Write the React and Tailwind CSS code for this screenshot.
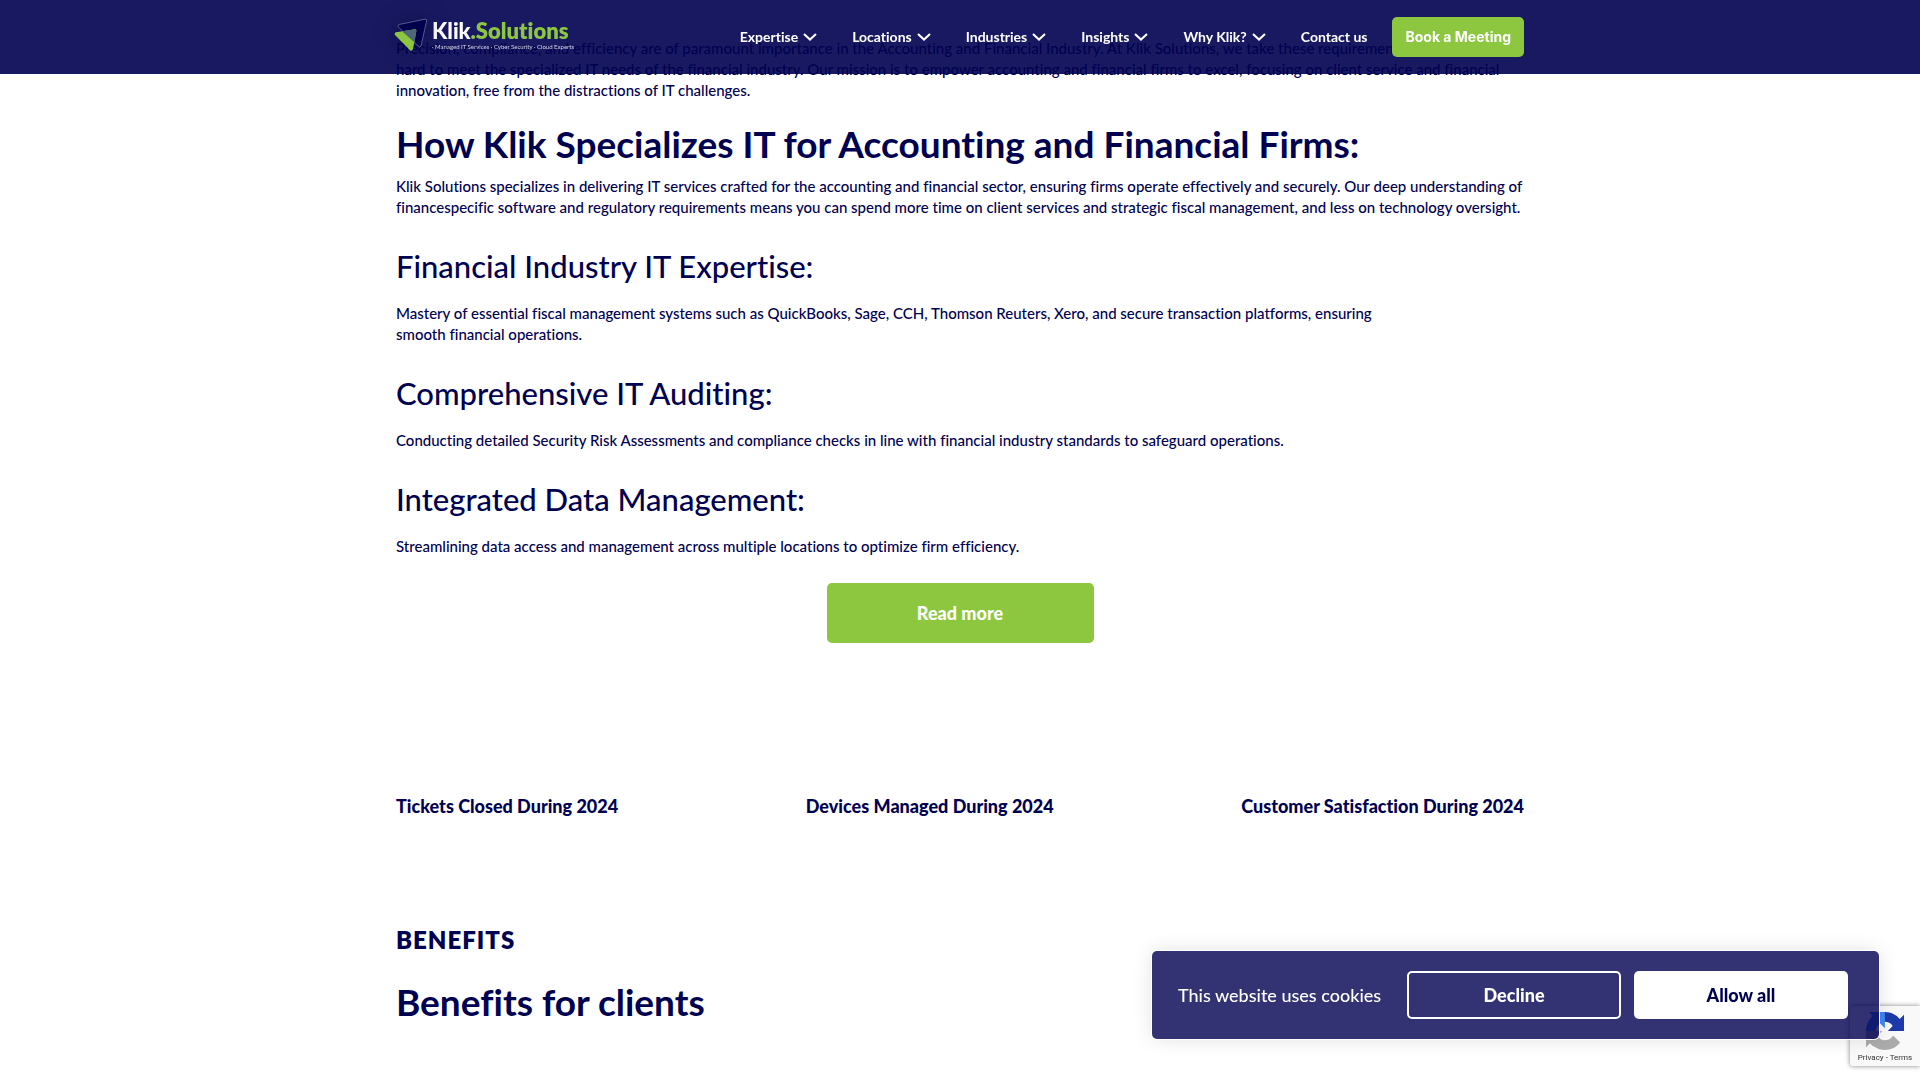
import React from "react";

const NAV = ["Expertise", "Locations", "Industries", "Insights", "Why Klik?"];

const TOPICS = [
  {
    title: "Financial Industry IT Expertise:",
    body: (
      <>
        Mastery of essential fiscal management systems such as QuickBooks, Sage, CCH, Thomson Reuters, Xero, and secure transaction platforms, ensuring
        <br />
        smooth financial operations.
      </>
    ),
  },
  {
    title: "Comprehensive IT Auditing:",
    body: "Conducting detailed Security Risk Assessments and compliance checks in line with financial industry standards to safeguard operations.",
  },
  {
    title: "Integrated Data Management:",
    body: "Streamlining data access and management across multiple locations to optimize firm efficiency.",
  },
];

const STATS = ["Tickets Closed During 2024", "Devices Managed During 2024", "Customer Satisfaction During 2024"];

function Chevron() {
  return (
    <svg className="h-2 w-[14px]" viewBox="0 0 14 8" fill="none" stroke="currentColor" strokeWidth="2" aria-hidden="true">
      <path d="M1 1l6 5.6L13 1" />
    </svg>
  );
}

function Logo() {
  return (
    <a href="#home" className="-ml-[2px] mb-1 flex items-center gap-1" aria-label="Klik Solutions">
      <svg className="h-[36px] w-[34px] drop-shadow-[0_0_10px_rgba(0,0,50,0.5)]" viewBox="0 0 34 36" aria-hidden="true">
        <path d="M5 7.5L31 2.2Q33 2 32.6 4L27 29Q26 31 24.6 29.3L4.4 10Q3.4 8 5 7.5Z" fill="#00004c" stroke="#6a6aa0" strokeWidth="0.8" />
        <path d="M2 15.3L21 12.2Q22.6 12.2 22.3 14L19 32Q18 34.8 16 33.3L1 18Q0 16 2 15.3Z" fill="#8dc73f" />
        <path d="M8 14.3L21 12.2Q22.6 12.2 22.3 14L20.5 25.5Z" fill="#4e6878" />
      </svg>
      <span className="flex flex-col">
        <span className="text-[22px] leading-6 font-black text-white">
          Klik<span className="font-extrabold text-[#8dc73f]">.Solutions</span>
        </span>
        <span className="text-[6px] leading-2 whitespace-nowrap text-white/80">· Managed IT Services · Cyber Security · Cloud Experts</span>
      </span>
    </a>
  );
}

function Header() {
  return (
    <header className="fixed inset-x-0 top-0 z-10 bg-[#000050]/90">
      <div className="mx-auto flex h-[74px] max-w-[1128px] items-center justify-between">
        <Logo />
        <nav className="flex items-center gap-[35px] text-sm font-bold text-white">
          {NAV.map((label) => (
            <button key={label} type="button" className="flex items-center gap-[5px]">
              {label}
              <Chevron />
            </button>
          ))}
          <a href="#contact">Contact us</a>
          <a href="#book" className="-ml-[10px] rounded-[5px] bg-[#8dc73f] px-[13px] py-[10px] font-['Inter',sans-serif] text-sm leading-5 font-bold">
            Book a Meeting
          </a>
        </nav>
      </div>
    </header>
  );
}

function CookieBanner() {
  return (
    <section
      aria-label="Cookie consent"
      className="fixed right-[41px] bottom-[41px] z-30 flex items-center gap-[13px] rounded-[5px] bg-[#000050]/80 py-5 pr-[31px] pl-[26px] text-lg shadow-[0_0_0_1px_#fff,0_0_20px_rgba(0,0,0,0.12)]"
    >
      <p className="mr-2 w-[208px] font-medium text-white">This website uses cookies</p>
      <button type="button" className="h-12 w-[214px] rounded-[5px] border-2 border-white font-black text-white">
        Decline
      </button>
      <button type="button" className="h-12 w-[214px] rounded-[5px] bg-white font-black text-[#000050]">
        Allow all
      </button>
    </section>
  );
}

function RecaptchaBadge() {
  return (
    <aside className="fixed right-0 bottom-[14px] z-20 flex h-[60px] w-[70px] flex-col items-center rounded-l-[3px] bg-[#f9f9f9] pt-[6px] shadow-[0_0_5px_gray]">
      <svg className="h-[38px] w-[38px]" viewBox="0 0 64 64" aria-hidden="true">
        <path d="M64 31.955l-.033-1.370V4.687l-7.160 7.160C50.948 4.674 42.033.093 32.050.093c-10.400 0-19.622 4.960-25.458 12.640l11.736 11.860a15.550 15.550 0 0 1 4.754-5.334c2.050-1.600 4.952-2.906 8.968-2.906.485 0 .86.057 1.135.163 4.976.393 9.288 3.140 11.828 7.124l-8.307 8.307L64 31.953" fill="#1c3aa9" />
        <path d="M31.862.094l-1.370.033H4.594l7.160 7.160C4.580 13.147 0 22.060 0 32.046c0 10.400 4.960 19.622 12.640 25.458L24.500 45.768a15.550 15.550 0 0 1-5.334-4.754c-1.600-2.050-2.906-4.952-2.906-8.968 0-.485.057-.86.163-1.135.393-4.976 3.140-9.288 7.124-11.828l8.307 8.307L31.860.095" fill="#4285f4" />
        <path d="M.001 32.045l.033 1.370v25.898l7.160-7.160c5.860 7.173 14.774 11.754 24.760 11.754 10.400 0 19.622-4.960 25.458-12.640l-11.736-11.860a15.550 15.550 0 0 1-4.754 5.334c-2.050 1.600-4.952 2.906-8.968 2.906-.485 0-.86-.057-1.135-.163-4.976-.393-9.288-3.140-11.828-7.124l8.307-8.307L.001 32.047" fill="#ababab" />
      </svg>
      <p className="font-['Roboto',sans-serif] text-[8px] leading-[15px] whitespace-nowrap text-[#333]">
        <a href="#privacy">Privacy</a> - <a href="#terms">Terms</a>
      </p>
    </aside>
  );
}

export default function App() {
  return (
    <div className="min-h-screen bg-white font-['Lato','Liberation_Sans',sans-serif] text-[#000050] [font-variant-ligatures:none]">
      <Header />
      <main className="mx-auto max-w-[1128px] pt-[38px] text-[15px] leading-[21px] font-medium">
        <p>
          Precision, compliance, and efficiency are of paramount importance in the Accounting and Financial Industry. At Klik Solutions, we take these requirements seriously,
          <br />
          hard to meet the specialized IT needs of the financial industry. Our mission is to empower accounting and financial firms to excel, focusing on client service and financial
          <br />
          innovation, free from the distractions of IT challenges.
        </p>
        <h2 className="mt-5 text-[37px] leading-[45px] font-bold">How Klik Specializes IT for Accounting and Financial Firms:</h2>
        <p className="mt-[10px]">
          Klik Solutions specializes in delivering IT services crafted for the accounting and financial sector, ensuring firms operate effectively and securely. Our deep understanding of
          <br />
          financespecific software and regulatory requirements means you can spend more time on client services and strategic fiscal management, and less on technology oversight.
        </p>
        {TOPICS.map(({ title, body }) => (
          <section key={title} className="pt-[30px]">
            <h3 className="text-[31px] leading-9 font-medium">{title}</h3>
            <p className="mt-[19px]">{body}</p>
          </section>
        ))}
        <a href="#more" className="mx-auto mt-[26px] flex h-[60px] w-[267px] items-center justify-center rounded-[5px] bg-[#8dc73f] text-lg font-black text-white">
          Read more
        </a>
        <ul className="mt-[150px] flex justify-between text-lg leading-[26px] font-black">
          {STATS.map((label) => (
            <li key={label}>{label}</li>
          ))}
        </ul>
        <h4 className="mt-[106px] text-2xl leading-[30px] font-extrabold tracking-[1px]">BENEFITS</h4>
        <h2 className="mt-6 text-[37px] leading-[45px] font-bold">Benefits for clients</h2>
      </main>
      <RecaptchaBadge />
      <CookieBanner />
    </div>
  );
}
